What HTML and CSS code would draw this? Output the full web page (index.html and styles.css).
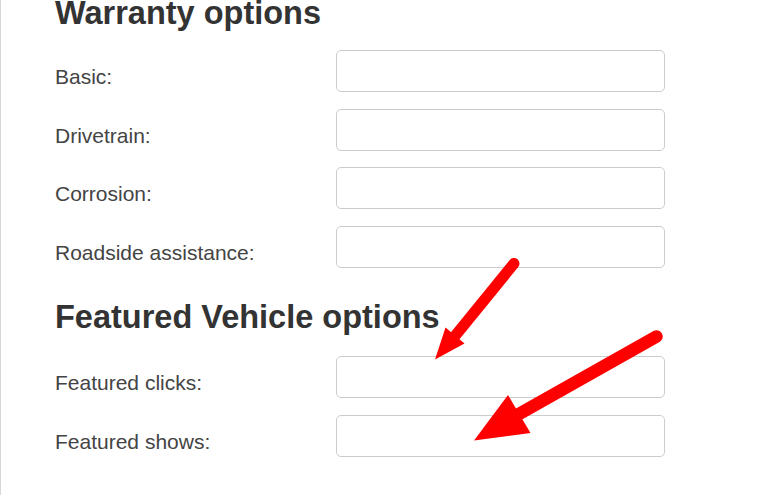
FILE: index.html
```html
<!DOCTYPE html>
<html lang="en">
<head>
<meta charset="utf-8">
<title>Vehicle options</title>
<link rel="stylesheet" href="styles.css">
</head>
<body>
<div class="page">
  <section class="section">
    <h2 class="section-title">Warranty options</h2>
    <div class="form-row"><label class="form-label">Basic:</label><input class="form-input" type="text"></div>
    <div class="form-row"><label class="form-label">Drivetrain:</label><input class="form-input" type="text"></div>
    <div class="form-row"><label class="form-label">Corrosion:</label><input class="form-input" type="text"></div>
    <div class="form-row"><label class="form-label">Roadside assistance:</label><input class="form-input" type="text"></div>
  </section>
  <section class="section">
    <h2 class="section-title">Featured Vehicle options</h2>
    <div class="form-row"><label class="form-label">Featured clicks:</label><input class="form-input" type="text"></div>
    <div class="form-row"><label class="form-label">Featured shows:</label><input class="form-input" type="text"></div>
  </section>

  <svg class="annotations" width="763" height="499" viewBox="0 0 763 499" aria-hidden="true">
    <line x1="514" y1="267.5" x2="455" y2="340" stroke="#ff0000" stroke-width="11" stroke-linecap="round"/>
    <polygon points="435,363.5 445.5,331.5 464.5,347.5" fill="#ff0000"/>
    <line x1="656.5" y1="340.5" x2="519" y2="418" stroke="#ff0000" stroke-width="12.5" stroke-linecap="round"/>
    <polygon points="474,444.5 508,399 530.5,437" fill="#ff0000"/>
  </svg>
</div>
</body>
</html>
```

FILE: styles.css
```css
html, body {
  margin: 0;
  padding: 0;
  background: #ffffff;
}

body {
  width: 763px;
  height: 499px;
  overflow: hidden;
  font-family: "Liberation Sans", Arial, sans-serif;
}

.page {
  position: relative;
  height: 499px;
  box-sizing: border-box;
  border-left: 1px solid #d6d6d6;
  padding-left: 54px;
}

.section {
  display: flex;
  flex-direction: column;
}

.section:first-child {
  margin-top: -4.1px;
}

.section + .section {
  margin-top: 15.2px;
}

.section-title {
  margin: 0 0 18.4px;
  font-size: 32.5px;
  line-height: 1.1;
  font-weight: 700;
  color: #333333;
}

.section + .section .section-title {
  margin-bottom: 20.4px;
}

.form-row {
  display: grid;
  grid-template-columns: 281px 329px;
  margin-bottom: 16.67px;
}

.form-label {
  padding-top: 12px;
  font-size: 21px;
  line-height: 30px;
  color: #444444;
}

.form-input {
  box-sizing: border-box;
  width: 329px;
  height: 42px;
  margin: 0;
  padding: 6px 12px;
  border: 1px solid #cccccc;
  border-radius: 5px;
  background: #ffffff;
  font: inherit;
  outline: none;
}

.annotations {
  position: absolute;
  left: -1px;
  top: 0;
  pointer-events: none;
}
```
